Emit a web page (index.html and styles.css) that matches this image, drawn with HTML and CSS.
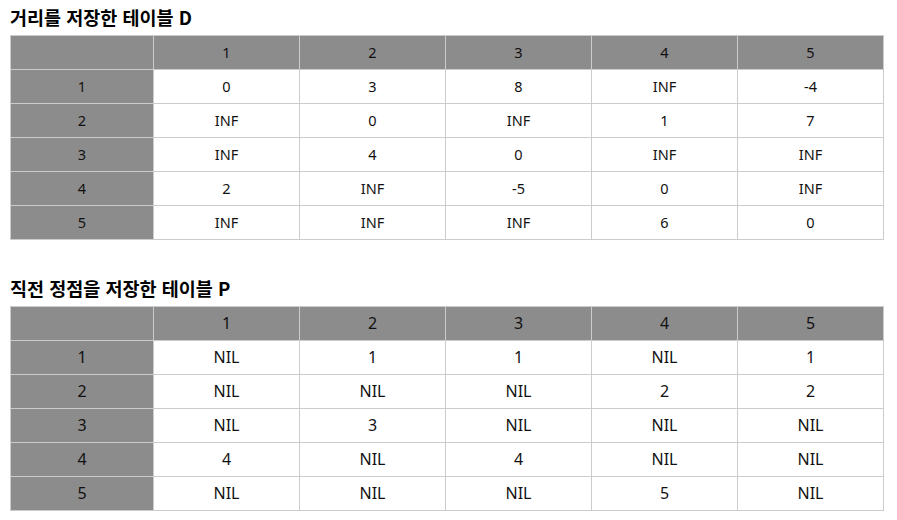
FILE: index.html
```html
<!DOCTYPE html>
<html lang="ko">
<head>
<meta charset="utf-8">
<link rel="stylesheet" href="styles.css">
</head>
<body>
<h2 class="title first">거리를 저장한 테이블 D</h2>
<table class="grid small">
  <colgroup><col class="c0"><col class="c"><col class="c"><col class="c"><col class="c"><col class="c"></colgroup>
  <tr class="head"><th></th><th>1</th><th>2</th><th>3</th><th>4</th><th>5</th></tr>
  <tr><th>1</th><td>0</td><td>3</td><td>8</td><td>INF</td><td>-4</td></tr>
  <tr><th>2</th><td>INF</td><td>0</td><td>INF</td><td>1</td><td>7</td></tr>
  <tr><th>3</th><td>INF</td><td>4</td><td>0</td><td>INF</td><td>INF</td></tr>
  <tr><th>4</th><td>2</td><td>INF</td><td>-5</td><td>0</td><td>INF</td></tr>
  <tr><th>5</th><td>INF</td><td>INF</td><td>INF</td><td>6</td><td>0</td></tr>
</table>
<h2 class="title second">직전 정점을 저장한 테이블 P</h2>
<table class="grid large">
  <colgroup><col class="c0"><col class="c"><col class="c"><col class="c"><col class="c"><col class="c"></colgroup>
  <tr class="head"><th></th><th>1</th><th>2</th><th>3</th><th>4</th><th>5</th></tr>
  <tr><th>1</th><td>NIL</td><td>1</td><td>1</td><td>NIL</td><td>1</td></tr>
  <tr><th>2</th><td>NIL</td><td>NIL</td><td>NIL</td><td>2</td><td>2</td></tr>
  <tr><th>3</th><td>NIL</td><td>3</td><td>NIL</td><td>NIL</td><td>NIL</td></tr>
  <tr><th>4</th><td>4</td><td>NIL</td><td>4</td><td>NIL</td><td>NIL</td></tr>
  <tr><th>5</th><td>NIL</td><td>NIL</td><td>NIL</td><td>5</td><td>NIL</td></tr>
</table>
</body>
</html>
```
FILE: styles.css
```css
html, body {
  margin: 0;
  padding: 0;
  background: #fff;
}
body {
  padding: 0 10px;
  font-family: "Noto Sans", "Noto Sans CJK KR", sans-serif;
  color: #111;
}
.title {
  font-family: "Noto Sans CJK KR", "Noto Sans", sans-serif;
  font-size: 18.5px;
  font-weight: 700;
  line-height: 24px;
  margin: 0 0 6px 0;
  color: #000;
}
.title.first { padding-top: 5px; }
.title.second { margin-top: 36px; }
.grid {
  border-collapse: collapse;
  table-layout: fixed;
  width: 874px;
}
.grid .c0 { width: 143px; }
.grid .c { width: 146px; }
.grid th, .grid td {
  border: 1px solid #cccccc;
  padding: 0;
  height: 33px;
  line-height: 33px;
  text-align: center;
  font-weight: 400;
}
.grid th, .grid .head th {
  background: #8c8c8c;
}
.grid td { background: #fff; }
.small th, .small td { font-size: 14.5px; }
.large th, .large td { font-size: 16px; }
```
